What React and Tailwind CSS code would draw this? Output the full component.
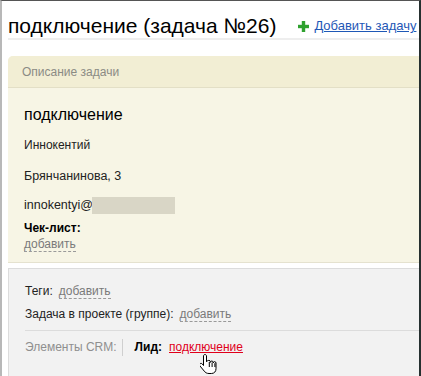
import React from "react";

const Dashed = ({ children }) => (
  <span className="text-[#7a7a7a] border-b border-dashed border-[#9a9a9a] leading-[14px]">{children}</span>
);

const HandCursor = () => (
  <svg width="18" height="22" viewBox="0 0 18 22" className="absolute left-[198px] top-[352px]">
    <path
      d="M5 1.5c-.8 0-1.5.7-1.5 1.5v9.5L2.3 11c-.7-.8-1.8-.8-2.4-.1-.5.6-.4 1.5.1 2.1l4.3 5.2c1 1.3 2.4 2.3 4.7 2.3h2.4c2.9 0 4.6-2 4.6-4.8V10c0-.8-.6-1.4-1.4-1.4s-1.4.6-1.4 1.4v-.6c0-.8-.6-1.4-1.4-1.4s-1.4.6-1.4 1.4v-.6c0-.8-.6-1.4-1.4-1.4S6.5 8 6.5 8.8V3c0-.8-.7-1.5-1.5-1.5z"
      fill="#fff"
      stroke="#000"
      strokeWidth="1"
    />
    <path d="M9.3 9v5M12.1 9.6v4.4M14.9 10.2v3.8" stroke="#000" strokeWidth="1" />
  </svg>
);

const App = () => {
  return (
    <div
      className="relative w-[421px] h-[376px] overflow-hidden bg-white border-t border-t-[#555] border-l-2 border-l-[#b8b8b8] border-r-2 border-r-[#263030]"
      style={{ fontFamily: '"Liberation Sans", Arial, sans-serif' }}
    >
      {/* Title */}
      <div className="flex items-center ml-[6px] pt-[12px] h-[39px] border-b-2 border-[#eeeeee]">
        <h1 className="text-[21px] leading-[26px] text-black whitespace-nowrap">подключение (задача №26)</h1>
        <div className="flex items-center ml-[22px] mt-[1px]">
          <svg width="11" height="11" viewBox="0 0 11 11" className="mr-[5px]">
            <rect x="3.8" y="0" width="3.4" height="11" fill="#2fa12f" />
            <rect x="0" y="3.8" width="11" height="3.4" fill="#2fa12f" />
          </svg>
          <a className="text-[13px] text-[#1f58b6] underline whitespace-nowrap">Добавить задачу</a>
        </div>
      </div>

      {/* Description panel */}
      <div className="ml-[6px] mt-[16px] rounded-tl-[5px] bg-[#f7f5e5] border-b border-[#e5e2cf]">
        <div className="h-[32px] flex items-center pl-[14px] pt-[1px] bg-[#f2eed4] border-b border-[#e3dfc6] rounded-tl-[5px]">
          <span className="text-[12px] text-[#8b8b84]">Описание задачи</span>
        </div>
        <div className="pl-[16px] pt-[17px] pb-[10px] text-[12px] text-[#222]">
          <div className="text-[16px] leading-[20px] text-black">подключение</div>
          <div className="mt-[13px] leading-[15px]">Иннокентий</div>
          <div className="mt-[16px] leading-[15px] text-[12.5px]">Брянчанинова, 3</div>
          <div className="mt-[13px] flex items-center leading-[15px] text-[12.5px]">
            <span>innokentyi@</span>
            <span className="inline-block w-[83px] h-[17px] bg-[#d9d6c6] -ml-[1px]"></span>
          </div>
          <div className="mt-[7px] font-bold leading-[15px] text-black">Чек-лист:</div>
          <div className="mt-0 leading-[16px]">
            <Dashed>добавить</Dashed>
          </div>
        </div>
      </div>

      {/* Gray panel */}
      <div className="ml-[6px] mt-[5px] bg-[#f2f2f2] border-t border-l border-[#dcdcdc] h-[120px] pl-[16px] text-[12px] text-[#222]">
        <div className="pt-[14px] flex items-center gap-[6px] leading-[16px]">
          <span>Теги:</span>
          <Dashed>добавить</Dashed>
        </div>
        <div className="mt-[7px] flex items-center gap-[6px] leading-[16px]">
          <span>Задача в проекте (группе):</span>
          <Dashed>добавить</Dashed>
        </div>
        <div className="mt-[8px] border-t border-[#dcdcdc] pt-[7px] flex items-center h-[26px]">
          <span className="text-[#8f8f8f] pr-[5px]">Элементы CRM:</span>
          <span className="w-px h-[17px] bg-[#cfcfcf] mr-[12px]"></span>
          <span className="font-bold text-black mr-[7px]">Лид:</span>
          <a className="text-[#e0001b] underline">подключение</a>
        </div>
      </div>

      <HandCursor />
    </div>
  );
};

export default App;
